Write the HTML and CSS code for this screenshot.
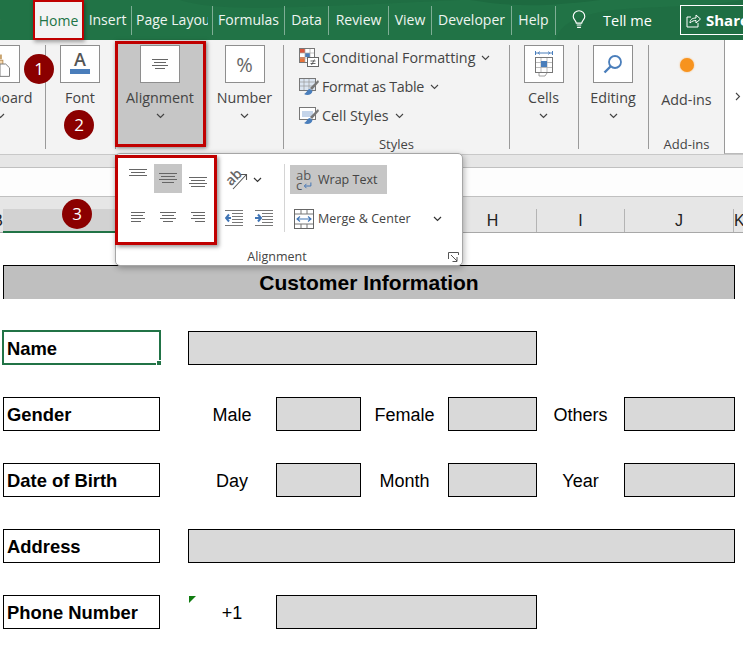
FILE: index.html
```html
<!DOCTYPE html>
<html lang="en">
<head>
<meta charset="utf-8">
<title>Customer Information</title>
<link rel="stylesheet" href="styles.css">
</head>
<body>
<div class="app">
  <header class="titlebar">
    <svg class="titlebar-art" width="743" height="40" viewBox="0 0 743 40" aria-hidden="true">
      <path d="M180 0C200 7 240 9 300 7C360 5 420 2 460 0Z" fill="#1f6e43"/>
      <path d="M470 0C520 8 550 6 600 0Z" fill="#1d6a40"/>
      <path d="M556 40C560 20 590 10 640 8C690 6 720 4 743 0V40Z" fill="#1f6e43"/>
    </svg>
    <nav class="tabs">
      <a class="tab tab-file"><span>File</span></a>
      <a class="tab tab-home">Home</a>
      <a class="tab tab-insert">Insert</a>
      <a class="tab tab-layout"><span>Page Layout</span></a>
      <a class="tab tab-formulas">Formulas</a>
      <a class="tab tab-data">Data</a>
      <a class="tab tab-review">Review</a>
      <a class="tab tab-view">View</a>
      <a class="tab tab-dev">Developer</a>
      <a class="tab tab-help">Help</a>
    </nav>
    <div class="tellme">
      <svg width="14" height="20" viewBox="0 0 18 26" aria-hidden="true"><path d="M5.500 17C5 13.500 1.500 12.500 1.500 8.500A7.500 7.500 0 0 1 16.500 8.500C16.500 12.500 13 13.500 12.500 17Z" fill="none" stroke="#fff" stroke-width="1.500"/><path d="M6 19.500H12M6.500 22.500H11.500" stroke="#fff" stroke-width="1.500"/></svg>
      <span>Tell me</span>
    </div>
    <div class="share">
      <svg width="15" height="15" viewBox="0 0 15 15" aria-hidden="true"><path d="M5 4H1V14H12V10M4 10C4 6 7 5 10 5V2L14.500 6L10 10V7.500C8 7.500 6 8 4 10Z" fill="none" stroke="#fff" stroke-width="1"/></svg>
      <strong>Share</strong>
    </div>
  </header>

  <section class="ribbon">
    <div class="group group-clip">
      <div class="iconbox">
        <svg width="40" height="37" viewBox="0 0 40 37" aria-hidden="true"><rect x="9" y="14" width="14" height="16" fill="#f6d9b0" stroke="#b98d55"/><rect x="14" y="8" width="8" height="5" fill="#c9a36f"/><path d="M20 18H26L30 22V31H20Z" fill="#fff" stroke="#777"/></svg>
      </div>
      <div class="glabel">Clipboard</div>
      <svg class="chev" width="9" height="6" viewBox="0 0 9 6"><path d="M1 1L4.500 4.500L8 1" fill="none" stroke="#444" stroke-width="1.200"/></svg>
    </div>
    <div class="divider"></div>
    <div class="group group-font">
      <div class="iconbox iconbox-font"><span class="letter-a">A</span><i class="a-bar"></i></div>
      <div class="glabel">Font</div>
    </div>
    <div class="divider"></div>
    <div class="group group-align">
      <div class="iconbox">
        <svg width="18" height="12" viewBox="0 0 18 12" aria-hidden="true"><path d="M1 1.500H17M3 4.500H15M1 7.500H17M4 10.500H14" stroke="#666" stroke-width="1"/></svg>
      </div>
      <div class="glabel">Alignment</div>
      <svg class="chev" width="9" height="6" viewBox="0 0 9 6"><path d="M1 1L4.500 4.500L8 1" fill="none" stroke="#444" stroke-width="1.200"/></svg>
    </div>
    <div class="group group-number">
      <div class="iconbox"><span class="percent">%</span></div>
      <div class="glabel">Number</div>
      <svg class="chev" width="9" height="6" viewBox="0 0 9 6"><path d="M1 1L4.500 4.500L8 1" fill="none" stroke="#444" stroke-width="1.200"/></svg>
    </div>
    <div class="divider"></div>
    <div class="group group-styles">
      <ul class="stylelist">
        <li>
          <svg width="20" height="20" viewBox="0 0 20 20" aria-hidden="true"><rect x="0.500" y="0.500" width="15" height="14" fill="#fff" stroke="#777"/><rect x="1" y="1" width="5" height="4" fill="#d9573c"/><rect x="6" y="5" width="5" height="4" fill="#4a7ebb"/><rect x="1" y="9" width="5" height="5" fill="#e8743b"/><path d="M6 1V14M11 1V14M1 5H15M1 10H15" stroke="#aaa" stroke-width=".7"/><rect x="8.500" y="9.500" width="11" height="9" fill="#fff" stroke="#666"/><path d="M11.500 13H16.500M11.500 15.500H16.500M15.500 11.500L12.500 17" stroke="#444" stroke-width=".8"/></svg>
          <span>Conditional Formatting</span>
          <svg class="chev-s" width="9" height="6" viewBox="0 0 9 6"><path d="M1 1L4.500 4.500L8 1" fill="none" stroke="#444" stroke-width="1.100"/></svg>
        </li>
        <li>
          <svg width="20" height="20" viewBox="0 0 20 20" aria-hidden="true"><rect x="0.500" y="1.500" width="16" height="12" fill="#dbe5f1" stroke="#777"/><path d="M5 2V13M10 2V13M1 5H16M1 9H16" stroke="#999" stroke-width=".7"/><path d="M19 3L11 11L13 13L20 5Z" fill="#777"/><path d="M11 12C8 12 8 16 5 17C8 19 13 18 13.500 14Z" fill="#4a7ebb"/></svg>
          <span class="style-table">Format as Table</span>
          <svg class="chev-s" width="9" height="6" viewBox="0 0 9 6"><path d="M1 1L4.500 4.500L8 1" fill="none" stroke="#444" stroke-width="1.100"/></svg>
        </li>
        <li>
          <svg width="20" height="20" viewBox="0 0 20 20" aria-hidden="true"><rect x="0.500" y="1.500" width="16" height="12" fill="#fff" stroke="#777"/><rect x="3" y="5" width="11" height="6" fill="#c5d5ea"/><path d="M19 3L11 11L13 13L20 5Z" fill="#777"/><path d="M11 12C8 12 8 16 5 17C8 19 13 18 13.500 14Z" fill="#4a7ebb"/></svg>
          <span>Cell Styles</span>
          <svg class="chev-s" width="9" height="6" viewBox="0 0 9 6"><path d="M1 1L4.500 4.500L8 1" fill="none" stroke="#444" stroke-width="1.100"/></svg>
        </li>
      </ul>
      <div class="gfoot">Styles</div>
    </div>
    <div class="divider"></div>
    <div class="group group-cells">
      <div class="iconbox">
        <svg width="20" height="28" viewBox="0 0 20 28" aria-hidden="true"><path d="M1.500 3H18.500M1.500 1V5M18.500 1V5" stroke="#4a7ebb" stroke-width="1"/><path d="M6 1.500L4 3L6 4.500M14 1.500L16 3L14 4.500" fill="none" stroke="#4a7ebb" stroke-width=".8"/><rect x="1.500" y="7.500" width="17" height="15" fill="#fff" stroke="#777"/><path d="M7 8V22M13 8V22M2 12.500H18M2 17.500H18" stroke="#aaa" stroke-width=".8"/><rect x="7" y="11" width="6" height="6" fill="#4a7ebb"/><path d="M5 23V26H11L13 23" fill="none" stroke="#888" stroke-width=".8"/></svg>
      </div>
      <div class="glabel">Cells</div>
      <svg class="chev" width="9" height="6" viewBox="0 0 9 6"><path d="M1 1L4.500 4.500L8 1" fill="none" stroke="#444" stroke-width="1.200"/></svg>
    </div>
    <div class="divider"></div>
    <div class="group group-editing">
      <div class="iconbox">
        <svg width="20" height="20" viewBox="0 0 20 20" aria-hidden="true"><circle cx="12" cy="8" r="6" fill="none" stroke="#4a7ebb" stroke-width="1.800"/><path d="M7.500 12.500L1.500 18.500" stroke="#4a7ebb" stroke-width="2.400"/></svg>
      </div>
      <div class="glabel">Editing</div>
      <svg class="chev" width="9" height="6" viewBox="0 0 9 6"><path d="M1 1L4.500 4.500L8 1" fill="none" stroke="#444" stroke-width="1.200"/></svg>
    </div>
    <div class="divider"></div>
    <div class="group group-addins">
      <i class="orange-dot"></i>
      <div class="glabel">Add-ins</div>
      <div class="gfoot">Add-ins</div>
    </div>
    <div class="ribbon-more">
      <svg width="6" height="9" viewBox="0 0 6 9"><path d="M1 1L4.500 4.500L1 8" fill="none" stroke="#444" stroke-width="1.100"/></svg>
    </div>
  </section>

  <div class="strip"></div>
  <div class="formula"></div>

  <div class="colhead">
    <div class="col col-b-clip"><span>B</span></div>
    <div class="col col-selected"></div>
    <div class="col col-blank"></div>
    <div class="col col-h">H</div>
    <div class="col col-i">I</div>
    <div class="col col-j">J</div>
    <div class="col col-k">K</div>
  </div>

  <main class="sheet">
    <h1 class="sheet-title">Customer Information</h1>

    <div class="lab lab-selected">Name<i class="handle"></i></div>
    <div class="fill span-4"></div>

    <div class="lab">Gender</div>
    <div class="txt">Male</div><div class="fill"></div>
    <div class="txt">Female</div><div class="fill"></div>
    <div class="txt">Others</div><div class="fill"></div>

    <div class="lab">Date of Birth</div>
    <div class="txt">Day</div><div class="fill"></div>
    <div class="txt">Month</div><div class="fill"></div>
    <div class="txt">Year</div><div class="fill"></div>

    <div class="lab">Address</div>
    <div class="fill span-6"></div>

    <div class="lab">Phone Number</div>
    <div class="txt txt-flag">+1<i class="flag"></i></div>
    <div class="fill span-3"></div>
  </main>

  <aside class="popup">
    <div class="popup-body">
      <div class="align-grid">
        <div class="acell"><svg width="30" height="29" viewBox="0 0 30 29"><path d="M5 5.500H23M7 8.500H21M5 11.500H23" stroke="#666"/></svg></div>
        <div class="acell acell-on"><svg width="28" height="29" viewBox="0 0 28 29"><path d="M5 9.500H23M7 12.500H21M5 15.500H23M8 18.500H20" stroke="#666"/></svg></div>
        <div class="acell"><svg width="30" height="29" viewBox="0 0 30 29"><path d="M7 13.500H25M9 16.500H23M7 19.500H25M9 22.500H23" stroke="#666"/></svg></div>
        <div class="acell"><svg width="30" height="29" viewBox="0 0 30 29"><path d="M7 10.500H21M7 13.500H19M7 16.500H21M7 19.500H17" stroke="#666"/></svg></div>
        <div class="acell"><svg width="28" height="29" viewBox="0 0 28 29"><path d="M6 10.500H22M8 13.500H20M6 16.500H22M9 19.500H19" stroke="#666"/></svg></div>
        <div class="acell"><svg width="30" height="29" viewBox="0 0 30 29"><path d="M9 10.500H23M11 13.500H23M9 16.500H23M13 19.500H23" stroke="#666"/></svg></div>
      </div>
      <div class="tools">
        <div class="tool-row">
          <span class="orient"><span class="orient-ab">ab</span><svg class="orient-arrow" width="22" height="20" viewBox="0 0 22 20"><path d="M6 18L19 4M14 3.500H19.500V9" fill="none" stroke="#555" stroke-width="1.100"/></svg></span>
          <svg class="chev-s" width="9" height="6" viewBox="0 0 9 6"><path d="M1 1L4.500 4.500L8 1" fill="none" stroke="#333" stroke-width="1.200"/></svg>
        </div>
        <div class="tool-row tool-row-indent">
          <svg width="18" height="16" viewBox="0 0 18 16"><path d="M0 .5H18M7 3.500H18M7 6.500H18M7 9.500H18M7 12.500H18M0 15.500H18" stroke="#777"/><path d="M6 8H1.500M4 4.500L1 8L4 11.500" fill="none" stroke="#3f74b5" stroke-width="2"/></svg>
          <svg width="18" height="16" viewBox="0 0 18 16"><path d="M0 .5H18M7 3.500H18M7 6.500H18M7 9.500H18M7 12.500H18M0 15.500H18" stroke="#777"/><path d="M0 8H5.500M3 4.500L6 8L3 11.500" fill="none" stroke="#3f74b5" stroke-width="2"/></svg>
        </div>
      </div>
      <div class="popup-div"></div>
      <div class="wraps">
        <div class="wrap-btn">
          <span class="abc"><span>ab</span><span class="abc-c">c<svg width="10" height="8" viewBox="0 0 10 8"><path d="M9 0V4H2M4 1.500L1.500 4L4 6.500" fill="none" stroke="#3f74b5" stroke-width="1.100"/></svg></span></span>
          <span>Wrap Text</span>
        </div>
        <div class="merge-btn">
          <svg width="20" height="20" viewBox="0 0 20 20"><rect x=".5" y=".5" width="19" height="19" fill="#fff" stroke="#666"/><path d="M1 5H19M1 15H19M7 1V5M13 1V5M7 15V19M13 15V19" stroke="#777"/><path d="M3 10H17M6 7.500L3 10L6 12.500M14 7.500L17 10L14 12.500" fill="none" stroke="#3f74b5" stroke-width="1.100"/></svg>
          <span class="merge-text">Merge &amp; Center</span>
          <svg class="chev-s" width="9" height="6" viewBox="0 0 9 6"><path d="M1 1L4.500 4.500L8 1" fill="none" stroke="#333" stroke-width="1.200"/></svg>
        </div>
      </div>
    </div>
    <div class="popup-foot">Alignment</div>
    <svg class="launcher" width="11" height="11" viewBox="0 0 11 11"><path d="M.5 7V.5H10.500V3M3 3L9 9M9 5V9.500H4.500" fill="none" stroke="#555"/></svg>
  </aside>

  <span class="badge badge-1">1</span>
  <span class="badge badge-2">2</span>
  <span class="badge badge-3">3</span>
</div>
</body>
</html>
```

FILE: styles.css
```css
* { box-sizing: border-box; }
html, body { margin: 0; padding: 0; background: #fff; }
.app {
  position: relative;
  width: 743px;
  height: 645px;
  overflow: hidden;
  font-family: "Open Sans", "Noto Sans", sans-serif;
  color: #444;
}

/* title bar */
.titlebar {
  position: relative;
  height: 40px;
  display: flex;
  align-items: center;
  background: #217346;
  color: #fff;
  font-size: 14px;
}
.titlebar-art { position: absolute; left: 0; top: 0; }
.tabs { position: relative; flex: none; display: flex; height: 40px; align-items: center; }
.tab {
  display: block;
  flex: none;
  height: 29px;
  line-height: 28px;
  text-align: center;
  white-space: nowrap;
  overflow: hidden;
  border-right: 1px solid #7fae95;
  color: #eef5f1;
}
.tab-file { width: 33px; border-right: 0; text-align: left; }
.tab-file span { display: inline-block; margin-left: -22px; }
.tab-home {
  width: 51px;
  height: 40px;
  line-height: 38px;
  background: #f3f3f3;
  color: #217346;
  border: 2.5px solid #c00000;
  box-shadow: 1px 2px 4px rgba(0,0,0,.35);
}
.tab-insert { width: 48px; }
.tab-layout { width: 81px; text-align: left; padding: 0 4px 0 4px; }
.tab-layout span { display: block; overflow: hidden; }
.tab-formulas { width: 72px; }
.tab-data { width: 44px; }
.tab-review { width: 60px; }
.tab-view { width: 43px; }
.tab-dev { width: 80px; }
.tab-help { width: 44px; }
.tellme {
  position: relative;
  flex: none;
  display: flex;
  align-items: center;
  gap: 17px;
  margin-left: 16px;
  width: 108px;
  font-size: 14.5px;
}
.share {
  position: relative;
  flex: none;
  display: flex;
  align-items: center;
  gap: 5px;
  width: 80px;
  height: 30px;
  padding-left: 5px;
  border: 1.5px solid #fff;
  font-size: 15px;
}

/* ribbon */
.ribbon {
  display: flex;
  height: 114px;
  background: #f3f3f3;
  font-size: 14.3px;
}
.divider { width: 1px; margin: 5px 0; background: #9a9a9a; }
.group {
  display: flex;
  flex-direction: column;
  align-items: center;
  padding-top: 5px;
  height: 114px;
  flex: none;
}
.iconbox {
  position: relative;
  flex: none;
  width: 40px;
  height: 38px;
  display: flex;
  align-items: center;
  justify-content: center;
  background: #fff;
  border: 1px solid #8e8e8e;
}
.glabel { margin-top: 5px; line-height: 20px; white-space: nowrap; }
.chev { margin-top: 5px; flex: none; }
.gfoot { margin-top: auto; line-height: 20px; font-size: 13px; }
.group-clip { width: 90px; margin-left: -45px; }
.group-font { width: 69px; padding-right: 1px; }
.iconbox-font { flex-direction: column; justify-content: flex-start; }
.letter-a { font-size: 18px; font-weight: 600; line-height: 20px; color: #555; margin-top: 3px; }
.a-bar { display: block; width: 20px; height: 5px; background: #4a7ebb; }
.group-align {
  position: relative;
  width: 91px;
  height: 106px;
  margin-top: 1px;
  margin-left: -1px;
  padding-top: 1px;
  padding-right: 1px;
  background: #c6c6c6;
  border: 3px solid #c00000;
  box-shadow: 1px 1px 4px rgba(0,0,0,.5);
}
.group-number { width: 77px; }
.percent { font-size: 20px; color: #666; }
.group-styles { width: 225px; align-items: stretch; padding-top: 3px; }
.stylelist { list-style: none; margin: 0; padding: 0 0 0 15px; }
.stylelist li { display: flex; align-items: center; height: 29px; gap: 3px; }
.style-table { letter-spacing: -.3px; }
.chev-s { flex: none; margin-left: 3px; }
.group-styles .gfoot { text-align: center; }
.group-cells { width: 68px; padding-right: 1px; }
.group-editing { width: 69px; padding-right: 1px; }
.group-addins { width: 75px; }
.orange-dot {
  display: block;
  width: 14px;
  height: 14px;
  margin-top: 13px;
  border-radius: 50%;
  background: #f7931e;
  box-shadow: 0 0 2px #f9b46a;
}
.group-addins .glabel { margin-top: 18px; }
.ribbon-more {
  flex: 1;
  display: flex;
  align-items: center;
  justify-content: flex-end;
  padding: 0 2px 0 0;
  background: #fff;
  border-left: 1px solid #999;
  border-bottom: 1px solid #bbb;
}

/* below ribbon */
.strip { height: 13px; background: #e6e6e6; border-top: 1px solid #c8c8c8; }
.formula { height: 30px; background: #fdfdfd; border-top: 1px solid #c0c0c0; border-bottom: 1px solid #c0c0c0; }
.colhead {
  display: flex;
  align-items: stretch;
  height: 36px;
  padding-top: 12px;
  background: #e6e6e6;
  border-bottom: 1px solid #a8a8a8;
  font-family: "Liberation Sans", Arial, sans-serif;
  font-size: 16px;
  color: #222;
}
.col { display: flex; align-items: center; justify-content: center; overflow: hidden; border-right: 1px solid #b4b4b4; flex: none; }
.col-b-clip { width: 3px; justify-content: flex-end; border: 0; }
.col-selected { width: 157px; background: #d2d2d2; border: 0; border-bottom: 2px solid #217346; margin-bottom: -1px; }
.col-blank { width: 289px; }
.col-h { width: 88px; }
.col-i { width: 88px; }
.col-j { width: 109px; }
.col-k { width: 20px; border: 0; justify-content: flex-start; }

/* sheet */
.sheet {
  display: grid;
  grid-template-columns: 157px 28px 88px 85px 87px 89px 87px 111px;
  grid-auto-rows: 34px;
  row-gap: 32px;
  margin-top: 32px;
  padding-left: 3px;
  font-family: "Liberation Sans", Arial, sans-serif;
  color: #000;
}
.sheet-title {
  grid-column: 1 / -1;
  margin: 0;
  height: 34px;
  line-height: 34px;
  text-align: center;
  font-size: 21px;
  font-weight: 700;
  background: #bfbfbf;
  border-top: 1px solid #000;
  border-left: 1px solid #000;
  border-right: 1px solid #000;
  width: 732px;
}
.lab {
  grid-column: 1 / 3;
  width: 157px;
  position: relative;
  padding-left: 3px;
  line-height: 34px;
  font-size: 18.4px;
  font-weight: 700;
  border: 1px solid #000;
}
.lab-selected { border: 2px solid #217346; margin: -1px 0 0 -1px; width: 159px; height: 35px; padding-left: 3px; }
.handle {
  position: absolute;
  right: -3px;
  bottom: -3px;
  width: 6px;
  height: 6px;
  background: #217346;
  border: 1px solid #fff;
}
.txt { text-align: center; line-height: 36px; font-size: 18px; }
.fill { background: #d9d9d9; border: 1px solid #000; }
.span-3 { grid-column: span 3; }
.span-4 { grid-column: span 4; }
.span-6 { grid-column: span 6; }
.txt-flag { position: relative; }
.flag {
  position: absolute;
  left: 1px;
  top: 1px;
  width: 0;
  height: 0;
  border-top: 7px solid #107c10;
  border-right: 7px solid transparent;
}

/* alignment flyout */
.popup {
  position: absolute;
  left: 115px;
  top: 153px;
  width: 348px;
  height: 113px;
  display: flex;
  flex-direction: column;
  background: #fff;
  border: 1px solid #a6a6a6;
  border-radius: 5px;
  box-shadow: 1px 2px 6px rgba(0,0,0,.3);
  font-size: 12.5px;
}
.popup-body { display: flex; height: 94px; }
.align-grid {
  flex: none;
  width: 102px;
  height: 90px;
  margin-top: 1px;
  padding: 6px 0 0 6px;
  display: grid;
  grid-template-columns: 30px 28px 30px;
  grid-template-rows: 29px 29px;
  row-gap: 9px;
  margin-left: -1px;
  border: 3px solid #c00000;
  box-shadow: 2px 2px 4px rgba(0,0,0,.4);
}
.acell svg { display: block; }
.acell-on { background: #c6c6c6; }
.tools {
  flex: none;
  width: 59px;
  margin-left: 8px;
  margin-top: 11px;
  display: grid;
  grid-template-rows: 29px 29px;
  row-gap: 9px;
}
.tool-row { display: flex; align-items: center; gap: 4px; }
.tool-row-indent { gap: 12px; }
.orient { position: relative; display: block; width: 22px; height: 20px; }
.orient-ab {
  position: absolute;
  left: 0;
  top: -1px;
  font-size: 14px;
  font-weight: 600;
  line-height: 16px;
  color: #666;
  transform: rotate(-45deg);
}
.orient-arrow { position: absolute; left: 2px; top: 1px; }
.tool-row .chev-s { margin-left: 2px; }
.popup-div { flex: none; width: 1px; height: 68px; margin-top: 10px; background: #d4d4d4; }
.wraps {
  flex: none;
  margin-left: 5px;
  margin-top: 11px;
  display: grid;
  grid-template-rows: 29px 29px;
  row-gap: 10px;
  width: 160px;
  line-height: 30px;
}
.wrap-btn {
  display: flex;
  align-items: center;
  gap: 6px;
  width: 97px;
  padding-left: 6px;
  background: #c6c6c6;
}
.abc { display: flex; flex-direction: column; font-size: 13px; line-height: 10px; color: #555; width: 16px; }
.abc-c { display: flex; align-items: flex-end; gap: 1px; }
.merge-btn { display: flex; align-items: center; gap: 4px; padding-left: 4px; }
.merge-text { width: 108px; letter-spacing: .05px; }
.popup-foot { padding-right: 24px; text-align: center; line-height: 17px; font-size: 12.5px; }
.launcher { position: absolute; right: 3px; bottom: 2px; }

/* numbered badges */
.badge {
  position: absolute;
  width: 30px;
  height: 30px;
  border-radius: 50%;
  background: #8b0000;
  color: #fff;
  font-size: 17px;
  line-height: 30px;
  text-align: center;
}
.badge-1 { left: 24px; top: 54px; }
.badge-2 { left: 64px; top: 110px; }
.badge-3 { left: 62px; top: 199px; }
```
